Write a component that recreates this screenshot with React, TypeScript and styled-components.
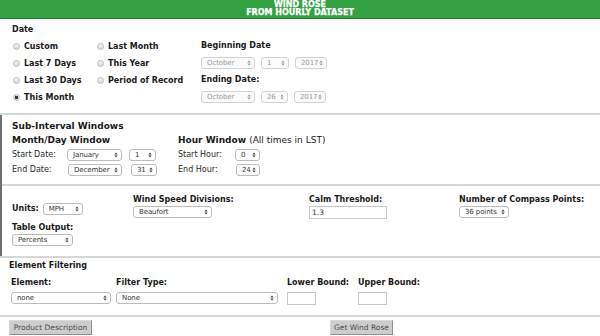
import React from 'react';
import styled, { createGlobalStyle } from 'styled-components';

const GlobalStyle = createGlobalStyle`
  html, body {
    margin: 0;
    padding: 0;
    background: #ffffff;
  }
  body {
    font-family: "DejaVu Sans", Verdana, sans-serif;
    color: #1a1a1a;
  }
`;

type SelectProps = {
  value: string;
  width: number;
  disabled?: boolean;
};

const Select: React.FC<SelectProps> = ({ value, width, disabled }) => (
  <SelectBox $width={width} $disabled={disabled}>
    <SelectText>{value}</SelectText>
    <svg width="4" height="6" viewBox="0 0 4 6">
      <polygon points="0.3,2.5 2,0.4 3.7,2.5" fill={disabled ? '#9a9a9a' : '#444'} />
      <polygon points="0.3,3.5 2,5.6 3.7,3.5" fill={disabled ? '#9a9a9a' : '#444'} />
    </svg>
  </SelectBox>
);

type RadioProps = {
  label: string;
  checked?: boolean;
};

const Radio: React.FC<RadioProps> = ({ label, checked }) => (
  <RadioRow>
    <RadioDot $checked={checked} />
    {label}
  </RadioRow>
);

const App: React.FC = () => {
  return (
    <>
      <GlobalStyle />
      <Page>
        <Header>
          <div>WIND ROSE</div>
          <div>FROM HOURLY DATASET</div>
        </Header>

        <DateSection>
          <SmallHeading>Date</SmallHeading>
          <DateGrid>
            <Radio label="Custom" />
            <Radio label="Last Month" />
            <SmallHeading>Beginning Date</SmallHeading>
            <Radio label="Last 7 Days" />
            <Radio label="This Year" />
            <SelectGroup>
              <Select value="October" width={54} disabled />
              <Select value="1" width={28} disabled />
              <Select value="2017" width={32} disabled />
            </SelectGroup>
            <Radio label="Last 30 Days" />
            <Radio label="Period of Record" />
            <SmallHeading>Ending Date:</SmallHeading>
            <Radio label="This Month" checked />
            <span />
            <SelectGroup>
              <Select value="October" width={54} disabled />
              <Select value="26" width={27} disabled />
              <Select value="2017" width={32} disabled />
            </SelectGroup>
          </DateGrid>
        </DateSection>

        <EdgeWrap>
          <SubSection>
            <Heading>Sub-Interval Windows</Heading>
            <WindowColumns>
              <div>
                <Heading>Month/Day Window</Heading>
                <FieldRow $labelWidth={55}>
                  <FieldLabel>Start Date:</FieldLabel>
                  <SelectGroup $gap={7}>
                    <Select value="January" width={55} />
                    <Select value="1" width={27} />
                  </SelectGroup>
                </FieldRow>
                <FieldRow $labelWidth={56}>
                  <FieldLabel>End Date:</FieldLabel>
                  <SelectGroup $gap={9}>
                    <Select value="December" width={54} />
                    <Select value="31" width={26} />
                  </SelectGroup>
                </FieldRow>
              </div>
              <div>
                <Heading>
                  Hour Window <Plain>(All times in LST)</Plain>
                </Heading>
                <FieldRow $labelWidth={57}>
                  <FieldLabel>Start Hour:</FieldLabel>
                  <Select value="0" width={25} />
                </FieldRow>
                <FieldRow $labelWidth={58}>
                  <FieldLabel>End Hour:</FieldLabel>
                  <Select value="24" width={24} />
                </FieldRow>
              </div>
            </WindowColumns>
          </SubSection>

          <OptionsSection>
            <OptionsGrid>
              <UnitsCell>
                <SmallHeading>Units:</SmallHeading>
                <Select value="MPH" width={40} />
              </UnitsCell>
              <Stack>
                <SmallHeading>Wind Speed Divisions:</SmallHeading>
                <Select value="Beaufort" width={79} />
              </Stack>
              <Stack>
                <SmallHeading>Calm Threshold:</SmallHeading>
                <TextBox $width={78}>1.3</TextBox>
              </Stack>
              <Stack>
                <SmallHeading>Number of Compass Points:</SmallHeading>
                <Select value="36 points" width={50} />
              </Stack>
              <Stack>
                <SmallHeading>Table Output:</SmallHeading>
                <Select value="Percents" width={61} />
              </Stack>
            </OptionsGrid>
          </OptionsSection>
        </EdgeWrap>

        <FilterSection>
          <SmallHeading>Element Filtering</SmallHeading>
          <FilterGrid>
            <Stack>
              <SmallHeading>Element:</SmallHeading>
              <Select value="none" width={100} />
            </Stack>
            <Stack>
              <SmallHeading>Filter Type:</SmallHeading>
              <Select value="None" width={162} />
            </Stack>
            <Stack>
              <SmallHeading>Lower Bound:</SmallHeading>
              <TextBox $width={29} />
            </Stack>
            <Stack>
              <SmallHeading>Upper Bound:</SmallHeading>
              <TextBox $width={29} />
            </Stack>
          </FilterGrid>
        </FilterSection>

        <ButtonBar>
          <GrayButton $width={83}>Product Description</GrayButton>
          <GrayButton $width={63}>Get Wind Rose</GrayButton>
        </ButtonBar>
      </Page>
    </>
  );
};

const Page = styled.div`
  width: 600px;
  height: 336px;
  overflow: hidden;
`;

const Header = styled.div`
  height: 19px;
  box-sizing: border-box;
  padding-top: 1px;
  background: #33a142;
  border-bottom: 1px solid #22802f;
  color: #ffffff;
  font-weight: bold;
  font-size: 8px;
  line-height: 8px;
  text-align: center;
  -webkit-text-stroke: 0.25px #ffffff;
`;

const Section = styled.div`
  border-bottom: 2px solid #d7d7d7;
`;

const DateSection = styled(Section)`
  padding: 6px 0 8px 12px;
`;

const SmallHeading = styled.div`
  font-weight: bold;
  font-size: 8px;
  line-height: 10px;
  color: #1a1a1a;
  white-space: nowrap;
`;

const DateGrid = styled.div`
  display: grid;
  grid-template-columns: 84px 105px auto;
  grid-auto-rows: 17px;
  align-items: center;
  margin-top: 2px;
`;

const RadioRow = styled.div`
  display: flex;
  align-items: center;
  font-weight: bold;
  font-size: 8px;
  color: #1a1a1a;
  white-space: nowrap;
  padding-left: 1px;
  padding-top: 1px;
`;

const RadioDot = styled.span<{ $checked?: boolean }>`
  width: 7px;
  height: 7px;
  box-sizing: border-box;
  border-radius: 50%;
  border: 1px solid #bcbcbc;
  background: ${(p) =>
    p.$checked
      ? 'radial-gradient(circle, #3a3a3a 0 1.4px, #e2e2e2 1.8px)'
      : 'linear-gradient(#f4f4f4, #d9d9d9)'};
  margin-right: 4px;
`;

const SelectGroup = styled.div<{ $gap?: number }>`
  display: flex;
  align-items: center;
  gap: ${(p) => p.$gap ?? 6}px;
`;

const SelectBox = styled.div<{ $width: number; $disabled?: boolean }>`
  width: ${(p) => p.$width}px;
  height: 12px;
  box-sizing: border-box;
  display: flex;
  align-items: center;
  justify-content: space-between;
  padding: 0 3px 0 5px;
  border: 1px solid ${(p) => (p.$disabled ? '#d2d2d2' : '#bdbdbd')};
  border-radius: 3px;
  background: ${(p) => (p.$disabled ? '#fbfbfb' : '#ffffff')};
  color: ${(p) => (p.$disabled ? '#9a9a9a' : '#333333')};
  font-size: 7px;
  flex-shrink: 0;
  & svg {
    flex-shrink: 0;
    margin-left: 1px;
  }
`;

const SelectText = styled.span`
  white-space: nowrap;
  letter-spacing: -0.1px;
`;

const EdgeWrap = styled.div`
  border-left: 2px solid #6e6e6e;
`;

const SubSection = styled(Section)`
  padding: 6px 0 7px 10px;
`;

const Heading = styled.div`
  font-weight: bold;
  font-size: 9px;
  line-height: 11px;
  margin-bottom: 3px;
  white-space: nowrap;
`;

const Plain = styled.span`
  font-weight: normal;
`;

const WindowColumns = styled.div`
  display: grid;
  grid-template-columns: 166px auto;
  & ${Heading} {
    margin-bottom: 1px;
  }
`;

const FieldRow = styled.div<{ $labelWidth: number }>`
  display: grid;
  grid-template-columns: ${(p) => p.$labelWidth}px auto;
  align-items: center;
  height: 15px;
`;

const FieldLabel = styled.span`
  font-size: 8px;
  color: #2a2a2a;
  white-space: nowrap;
`;

const OptionsSection = styled(Section)`
  padding: 9px 0 10px 10px;
  border-bottom: none;
`;

const OptionsGrid = styled.div`
  display: grid;
  grid-template-columns: 121px 176px 150px auto;
  row-gap: 4px;
`;

const UnitsCell = styled.div`
  display: flex;
  align-items: center;
  gap: 4px;
  padding-top: 4px;
`;

const Stack = styled.div`
  display: flex;
  flex-direction: column;
  align-items: flex-start;
  gap: 1px;
`;

const TextBox = styled.div<{ $width: number }>`
  width: ${(p) => p.$width}px;
  height: 13px;
  box-sizing: border-box;
  border: 1px solid #c9c9c9;
  background: #ffffff;
  font-size: 7.5px;
  line-height: 11px;
  padding-left: 2px;
  color: #333;
`;

const FilterSection = styled(Section)`
  border-top: 2px solid #d7d7d7;
  padding: 3px 0 10px 9px;
  & ${Stack} {
    gap: 4px;
  }
`;

const FilterGrid = styled.div`
  display: grid;
  grid-template-columns: 105px 171px 71px auto;
  margin: 7px 0 0 2px;
`;

const ButtonBar = styled.div`
  display: flex;
  gap: 238px;
  padding: 3px 0 0 9px;
`;

const GrayButton = styled.div<{ $width: number }>`
  width: ${(p) => p.$width}px;
  height: 15px;
  box-sizing: border-box;
  background: #cdcdcd;
  border: 1px solid #d9d9d9;
  border-right-color: #8f8f8f;
  border-bottom-color: #8f8f8f;
  color: #4a4a4a;
  font-size: 7.5px;
  display: flex;
  align-items: center;
  justify-content: center;
  white-space: nowrap;
`;

export default App;
